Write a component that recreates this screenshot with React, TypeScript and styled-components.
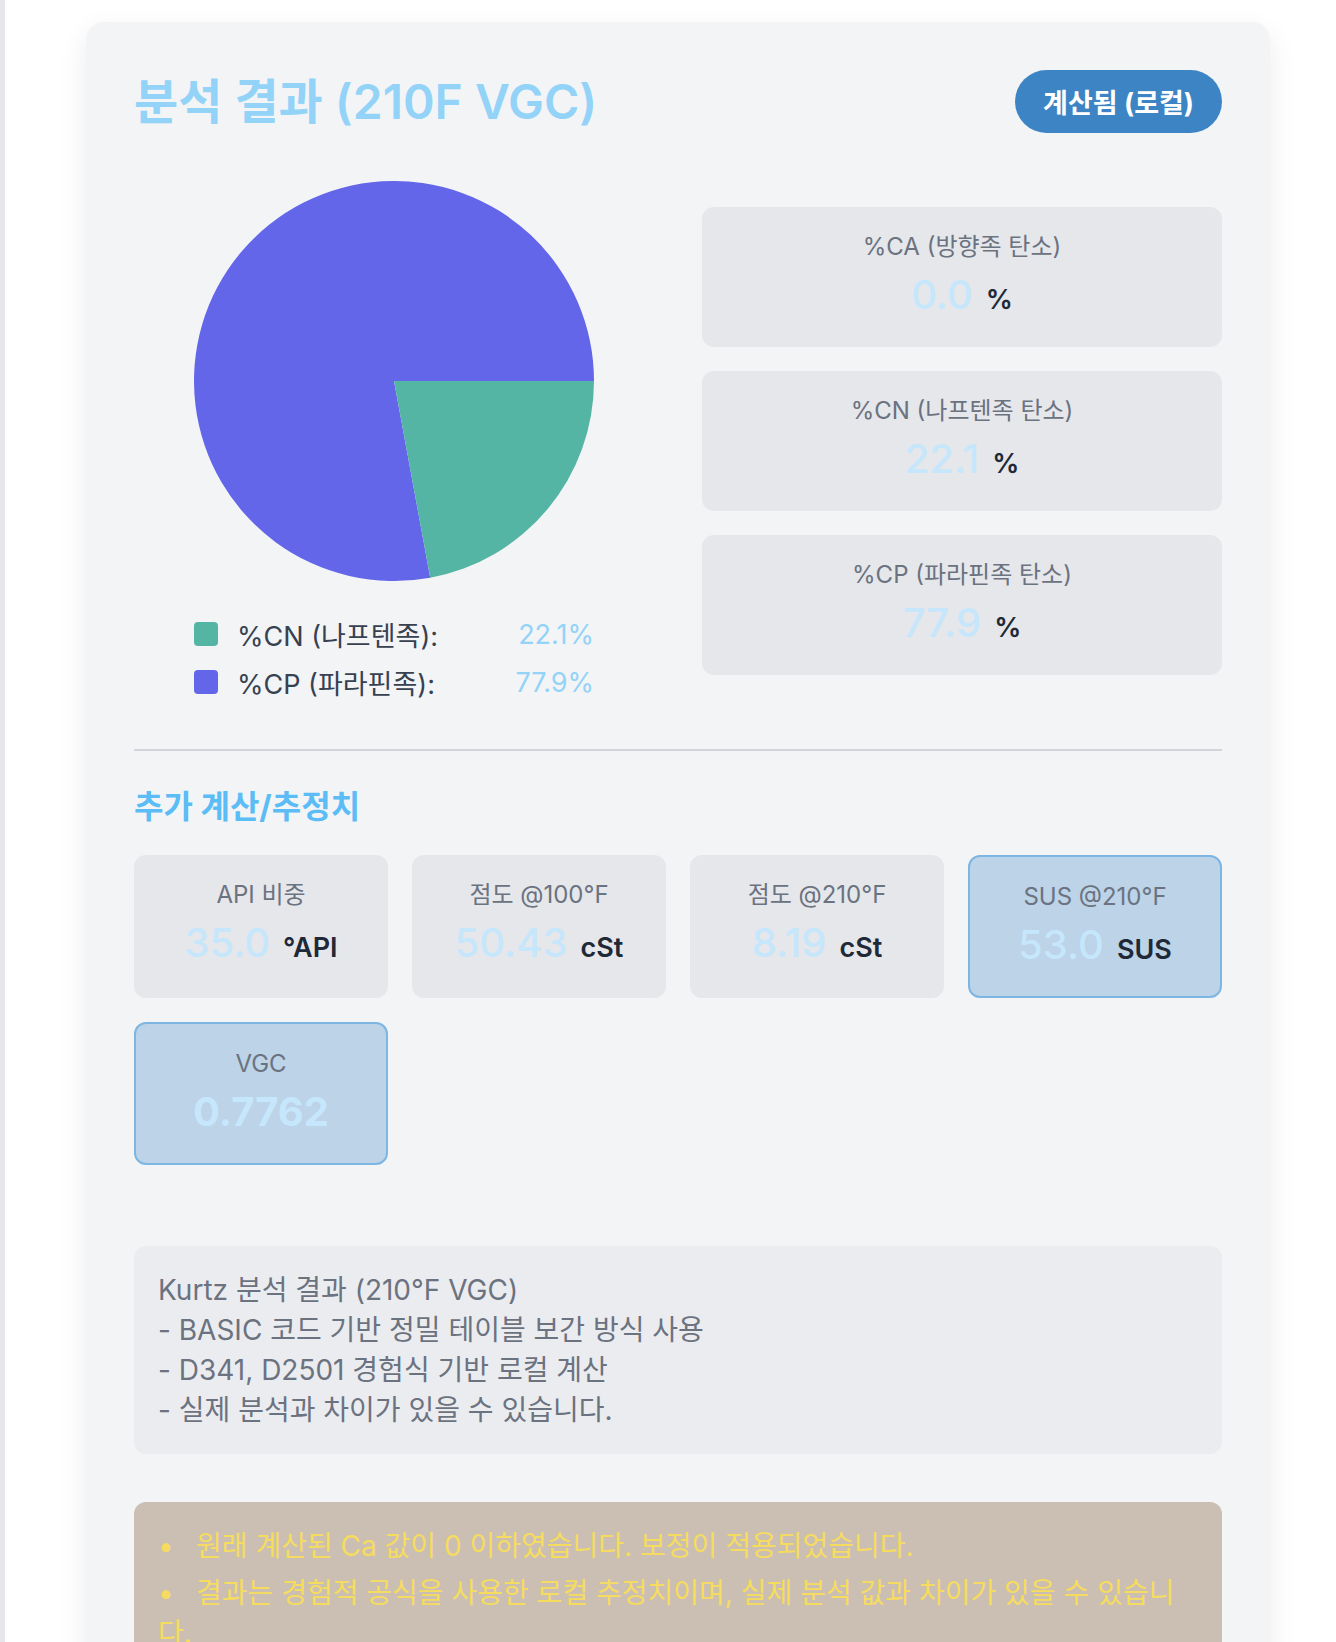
import React from 'react';
import styled, { createGlobalStyle } from 'styled-components';

const GlobalStyle = createGlobalStyle`
  * {
    box-sizing: border-box;
  }
  body {
    margin: 0;
    background: #ffffff;
    font-family: 'Inter', 'Noto Sans CJK KR', sans-serif;
  }
`;

type Metric = {
  label: string;
  value: string;
  unit?: string;
  highlight?: boolean;
  strong?: boolean;
};

const mainMetrics: Metric[] = [
  { label: '%CA (방향족 탄소)', value: '0.0', unit: '%' },
  { label: '%CN (나프텐족 탄소)', value: '22.1', unit: '%' },
  { label: '%CP (파라핀족 탄소)', value: '77.9', unit: '%' },
];

const extraMetrics: Metric[] = [
  { label: 'API 비중', value: '35.0', unit: '°API' },
  { label: '점도 @100°F', value: '50.43', unit: 'cSt' },
  { label: '점도 @210°F', value: '8.19', unit: 'cSt' },
  { label: 'SUS @210°F', value: '53.0', unit: 'SUS', highlight: true },
  { label: 'VGC', value: '0.7762', highlight: true, strong: true },
];

const legend = [
  { label: '%CN (나프텐족):', value: '22.1%', color: '#54b5a5' },
  { label: '%CP (파라핀족):', value: '77.9%', color: '#6366e9' },
];

const notes = `Kurtz 분석 결과 (210°F VGC)
- BASIC 코드 기반 정밀 테이블 보간 방식 사용
- D341, D2501 경험식 기반 로컬 계산
- 실제 분석과 차이가 있을 수 있습니다.`;

const warnings = [
  '원래 계산된 Ca 값이 0 이하였습니다. 보정이 적용되었습니다.',
  '결과는 경험적 공식을 사용한 로컬 추정치이며, 실제 분석 값과 차이가 있을 수 있습니다.',
];

function PieChart({ cn }: { cn: number }) {
  const angle = (cn / 100) * Math.PI * 2;
  const x = 200 + 200 * Math.cos(angle);
  const y = 200 + 200 * Math.sin(angle);
  const large = cn > 50 ? 1 : 0;
  return (
    <svg width="400" height="400" viewBox="0 0 400 400">
      <path d={`M200,200 L${x},${y} A200,200 0 ${1 - large} 1 400,200 Z`} fill="#6366e9" />
      <path d={`M200,200 L400,200 A200,200 0 ${large} 1 ${x},${y} Z`} fill="#54b5a5" />
    </svg>
  );
}

export default function App() {
  return (
    <>
      <GlobalStyle />
      <Page>
        <Card>
          <Header>
            <Title>분석 결과 (210F VGC)</Title>
            <Badge>계산됨 (로컬)</Badge>
          </Header>

          <TopGrid>
            <ChartColumn>
              <PieChart cn={22.1} />
              <Legend>
                {legend.map((item) => (
                  <LegendRow key={item.label}>
                    <Swatch $color={item.color} />
                    <LegendLabel>{item.label}</LegendLabel>
                    <LegendValue>{item.value}</LegendValue>
                  </LegendRow>
                ))}
              </Legend>
            </ChartColumn>
            <MetricColumn>
              {mainMetrics.map((m) => (
                <MetricBox key={m.label}>
                  <MetricLabel>{m.label}</MetricLabel>
                  <ValueLine>
                    <Value>{m.value}</Value>
                    <Unit>{m.unit}</Unit>
                  </ValueLine>
                </MetricBox>
              ))}
            </MetricColumn>
          </TopGrid>

          <Divider />

          <SectionTitle>추가 계산/추정치</SectionTitle>
          <ExtraGrid>
            {extraMetrics.map((m) => (
              <ExtraCard key={m.label} $highlight={m.highlight}>
                <MetricLabel>{m.label}</MetricLabel>
                <ValueLine>
                  <Value $strong={m.strong}>{m.value}</Value>
                  {m.unit && <Unit>{m.unit}</Unit>}
                </ValueLine>
              </ExtraCard>
            ))}
          </ExtraGrid>

          <Notes>{notes}</Notes>

          <Warning>
            <WarningList>
              {warnings.map((w) => (
                <WarningItem key={w}>{w}</WarningItem>
              ))}
            </WarningList>
          </Warning>
        </Card>
      </Page>
    </>
  );
}

const Page = styled.div`
  min-height: 100vh;
  border-left: 5px solid #e5e7eb;
  padding: 22px 0 40px 81px;
`;

const Card = styled.div`
  width: 1184px;
  background: #f3f4f6;
  border-radius: 18px;
  padding: 48px;
  box-shadow: 0 10px 30px rgba(0, 0, 0, 0.08);
`;

const Header = styled.header`
  display: flex;
  justify-content: space-between;
  align-items: center;
  margin-bottom: 48px;
`;

const Title = styled.h1`
  margin: 0;
  font-size: 48px;
  font-weight: 600;
  color: #93d3f8;
  line-height: 1.2;
`;

const Badge = styled.span`
  display: inline-flex;
  align-items: center;
  height: 63px;
  padding: 0 28px;
  border-radius: 999px;
  background: #3d84c4;
  color: #ffffff;
  font-size: 27px;
  font-weight: 700;
`;

const TopGrid = styled.div`
  display: grid;
  grid-template-columns: 1fr 1fr;
  gap: 48px;
  align-items: center;
`;

const ChartColumn = styled.div`
  display: flex;
  flex-direction: column;
  align-items: center;
  gap: 35px;
`;

const Legend = styled.div`
  width: 400px;
  display: flex;
  flex-direction: column;
  gap: 12px;
`;

const LegendRow = styled.div`
  display: flex;
  align-items: center;
  height: 36px;
`;

const Swatch = styled.span<{ $color: string }>`
  width: 24px;
  height: 24px;
  border-radius: 4px;
  background: ${(p) => p.$color};
  margin-right: 19px;
  flex-shrink: 0;
`;

const LegendLabel = styled.span`
  flex: 1;
  font-size: 27px;
  color: #374151;
`;

const LegendValue = styled.span`
  font-size: 27px;
  color: #93d3f8;
`;

const MetricColumn = styled.div`
  display: flex;
  flex-direction: column;
  gap: 24px;
`;

const MetricBox = styled.div`
  height: 140px;
  background: #e5e7eb;
  border-radius: 12px;
  padding: 24px 16px;
  text-align: center;
`;

const MetricLabel = styled.div`
  font-size: 24px;
  line-height: 32px;
  color: #6b7280;
`;

const ValueLine = styled.div`
  margin-top: 8px;
  display: flex;
  justify-content: center;
  align-items: baseline;
  line-height: 48px;
`;

const Value = styled.span<{ $strong?: boolean }>`
  font-size: 40px;
  font-weight: ${(p) => (p.$strong ? 700 : 500)};
  color: #c6e6fb;
`;

const Unit = styled.span`
  margin-left: 13px;
  font-size: 27px;
  font-weight: 600;
  color: #1f2937;
`;

const Divider = styled.hr`
  margin: 49px 0 0;
  border: none;
  border-top: 2px solid #d1d5db;
`;

const SectionTitle = styled.h2`
  margin: 36px 0 28px;
  font-size: 32px;
  line-height: 40px;
  font-weight: 700;
  color: #5cbcf5;
`;

const ExtraGrid = styled.div`
  display: grid;
  grid-template-columns: repeat(4, 1fr);
  gap: 24px;
`;

const ExtraCard = styled.div<{ $highlight?: boolean }>`
  height: 143px;
  border-radius: 12px;
  padding: 24px 12px;
  text-align: center;
  background: ${(p) => (p.$highlight ? '#bcd3e8' : '#e5e7eb')};
  border: ${(p) => (p.$highlight ? '2px solid #7db6e3' : 'none')};
`;

const Notes = styled.div`
  margin-top: 81px;
  padding: 24px;
  border-radius: 12px;
  background: #ebecef;
  color: #6b7280;
  font-size: 28px;
  line-height: 40px;
  white-space: pre-line;
`;

const Warning = styled.div`
  margin-top: 48px;
  padding: 24px;
  border-radius: 12px;
  background: #cbbfb4;
  color: #f6dc5e;
  font-size: 28px;
  line-height: 40px;
`;

const WarningList = styled.ul`
  margin: 0;
  padding: 0;
  list-style: none;
`;

const WarningItem = styled.li`
  margin-bottom: 7px;
  &::before {
    content: '•';
    display: inline-block;
    width: 38px;
  }
`;
